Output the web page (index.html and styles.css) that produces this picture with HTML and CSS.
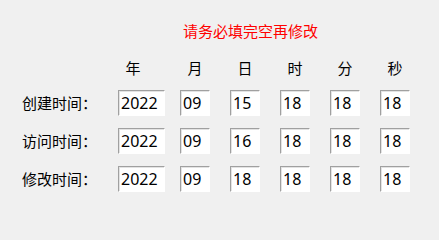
FILE: index.html
```html
<!DOCTYPE html>
<html lang="zh-CN">
<head>
<meta charset="utf-8">
<link rel="stylesheet" href="styles.css">
</head>
<body>
<div class="panel">
  <div class="notice">请务必填完空再修改</div>
  <div class="grid">
    <div></div>
    <div class="head">年</div>
    <div class="head">月</div>
    <div class="head">日</div>
    <div class="head">时</div>
    <div class="head">分</div>
    <div class="head">秒</div>

    <div class="label">创建时间：</div>
    <input class="field wide" type="text" value="2022">
    <input class="field" type="text" value="09">
    <input class="field" type="text" value="15">
    <input class="field" type="text" value="18">
    <input class="field" type="text" value="18">
    <input class="field" type="text" value="18">

    <div class="label">访问时间：</div>
    <input class="field wide" type="text" value="2022">
    <input class="field" type="text" value="09">
    <input class="field" type="text" value="16">
    <input class="field" type="text" value="18">
    <input class="field" type="text" value="18">
    <input class="field" type="text" value="18">

    <div class="label">修改时间：</div>
    <input class="field wide" type="text" value="2022">
    <input class="field" type="text" value="09">
    <input class="field" type="text" value="18">
    <input class="field" type="text" value="18">
    <input class="field" type="text" value="18">
    <input class="field" type="text" value="18">
  </div>
</div>
</body>
</html>
```
FILE: styles.css
```css
html, body {
  margin: 0;
  padding: 0;
  background: #f0f0f0;
}
body {
  width: 439px;
  height: 222px;
  overflow: hidden;
  font-family: "Noto Sans CJK SC", "Noto Sans", sans-serif;
  font-size: 15px;
  color: #000;
}
.panel {
  padding-top: 21px;
  padding-left: 22px;
}
.notice {
  margin-left: 161px;
  height: 20px;
  line-height: 20px;
  color: #ff0000;
  margin-bottom: 16px;
}
.grid {
  display: grid;
  grid-template-columns: 96px 62px 50px 50px 50px 50px 30px;
  grid-template-rows: 21px 26px 26px 26px;
  row-gap: 12px;
  align-items: center;
}
.head {
  width: 30px;
  text-align: center;
  line-height: 21px;
}
.label {
  line-height: 20px;
  letter-spacing: 0;
}
.field {
  box-sizing: border-box;
  width: 30px;
  height: 26px;
  margin: 0;
  padding: 0 0 0 2px;
  border-style: solid;
  border-width: 1px;
  border-color: #a0a0a0 #ffffff #ffffff #a0a0a0;
  box-shadow: inset 1px 1px 0 #e3e3e3;
  background: #fff;
  font-family: "Noto Sans", "Noto Sans CJK SC", sans-serif;
  font-size: 16px;
  color: #000;
  outline: none;
}
.field.wide {
  width: 47px;
}
```
